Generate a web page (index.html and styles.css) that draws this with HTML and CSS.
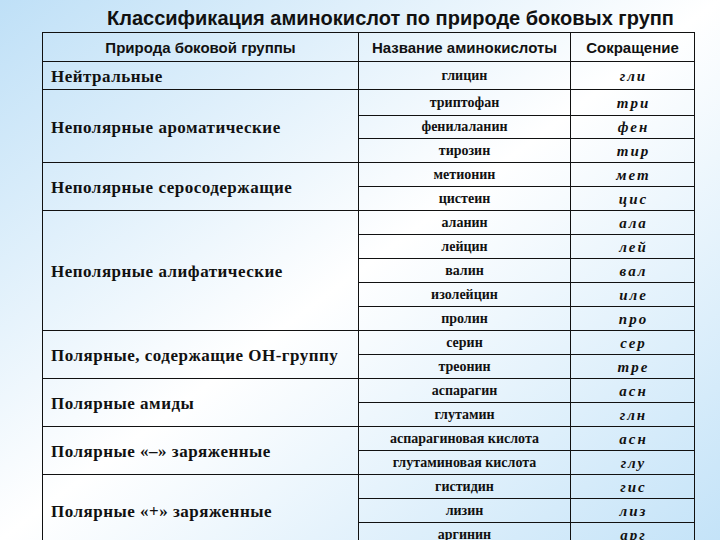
FILE: index.html
```html
<!DOCTYPE html>
<html lang="ru">
<head>
<meta charset="utf-8">
<link rel="stylesheet" href="styles.css">
</head>
<body>
<div class="slide">
  <h1 class="title">Классификация аминокислот по природе боковых групп</h1>
  <table class="amino">
    <colgroup>
      <col class="c1"><col class="c2"><col class="c3">
    </colgroup>
    <thead>
      <tr class="head">
        <th>Природа боковой группы</th>
        <th>Название аминокислоты</th>
        <th>Сокращение</th>
      </tr>
    </thead>
    <tbody>
      <tr class="r28"><td class="grp">Нейтральные</td><td class="name">глицин</td><td class="abbr">гли</td></tr>
      <tr class="r26"><td class="grp" rowspan="3">Неполярные ароматические</td><td class="name">триптофан</td><td class="abbr">три</td></tr>
      <tr class="r23"><td class="name">фенилаланин</td><td class="abbr">фен</td></tr>
      <tr><td class="name">тирозин</td><td class="abbr">тир</td></tr>
      <tr><td class="grp" rowspan="2">Неполярные серосодержащие</td><td class="name">метионин</td><td class="abbr">мет</td></tr>
      <tr><td class="name">цистеин</td><td class="abbr">цис</td></tr>
      <tr><td class="grp" rowspan="5">Неполярные алифатические</td><td class="name">аланин</td><td class="abbr">ала</td></tr>
      <tr><td class="name">лейцин</td><td class="abbr">лей</td></tr>
      <tr><td class="name">валин</td><td class="abbr">вал</td></tr>
      <tr><td class="name">изолейцин</td><td class="abbr">иле</td></tr>
      <tr><td class="name">пролин</td><td class="abbr">про</td></tr>
      <tr><td class="grp" rowspan="2">Полярные, содержащие ОН-группу</td><td class="name">серин</td><td class="abbr">сер</td></tr>
      <tr><td class="name">треонин</td><td class="abbr">тре</td></tr>
      <tr><td class="grp" rowspan="2">Полярные амиды</td><td class="name">аспарагин</td><td class="abbr">асн</td></tr>
      <tr><td class="name">глутамин</td><td class="abbr">глн</td></tr>
      <tr><td class="grp" rowspan="2">Полярные «–» заряженные</td><td class="name">аспарагиновая кислота</td><td class="abbr">асн</td></tr>
      <tr><td class="name">глутаминовая кислота</td><td class="abbr">глу</td></tr>
      <tr><td class="grp" rowspan="3">Полярные «+» заряженные</td><td class="name">гистидин</td><td class="abbr">гис</td></tr>
      <tr><td class="name">лизин</td><td class="abbr">лиз</td></tr>
      <tr><td class="name">аргинин</td><td class="abbr">арг</td></tr>
    </tbody>
  </table>
</div>
</body>
</html>
```

FILE: styles.css
```css
html, body {
  margin: 0;
  padding: 0;
}
body {
  width: 720px;
  height: 540px;
  overflow: hidden;
  background: linear-gradient(to bottom right, #bfe0f7 0%, #ffffff 50%, #c4e3f8 100%);
  color: #111;
}
.slide {
  padding-top: 7px;
}
.title {
  margin: 0 0 0 107px;
  font-family: "Liberation Sans", Arial, sans-serif;
  font-weight: bold;
  font-size: 20px;
  line-height: 22px;
  color: #111;
}
.amino {
  margin: 3px 0 0 42px;
  border-collapse: collapse;
  table-layout: fixed;
  width: 652px;
}
.c1 { width: 316px; }
.c2 { width: 212px; }
.c3 { width: 124px; }
.amino th, .amino td {
  border: 1px solid #111;
  padding: 0;
}
.head th {
  height: 28px;
  font-family: "Liberation Sans", Arial, sans-serif;
  font-weight: bold;
  font-size: 15px;
  text-align: center;
  vertical-align: middle;
}
.amino tbody tr { height: 24px; }
.amino tbody tr.r28 { height: 28px; }
.amino tbody tr.r26 { height: 26px; }
.amino tbody tr.r23 { height: 23px; }
.grp {
  font-family: "Liberation Serif", "Times New Roman", serif;
  font-weight: bold;
  font-size: 17px;
  letter-spacing: 0.5px;
  text-align: left;
  padding-left: 8px !important;
  padding-top: 3px !important;
  vertical-align: middle;
}
.name {
  font-family: "Liberation Serif", "Times New Roman", serif;
  font-weight: bold;
  font-size: 14px;
  line-height: 16px;
  text-align: center;
  vertical-align: middle;
}
.abbr {
  font-family: "Liberation Serif", "Times New Roman", serif;
  font-weight: bold;
  font-style: italic;
  font-size: 15px;
  line-height: 16px;
  letter-spacing: 2px;
  text-indent: 2px;
  text-align: center;
  vertical-align: middle;
}
```
